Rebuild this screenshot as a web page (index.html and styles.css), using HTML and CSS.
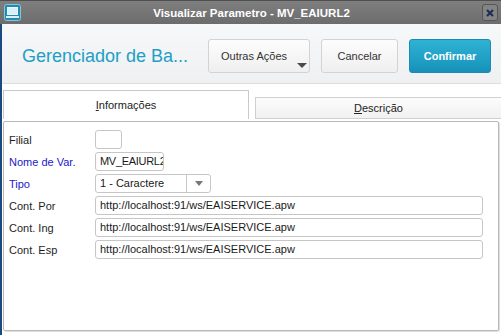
FILE: index.html
```html
<!DOCTYPE html>
<html lang="pt">
<head>
    <meta charset="UTF-8">
    <title>Visualizar Parametro - MV_EAIURL2</title>
    <link rel="stylesheet" href="styles.css">
</head>
<body>
    <div class="titlebar">
        <svg class="app-icon" width="17" height="17" viewBox="0 0 17 17">
            <rect x="0.5" y="0.5" width="16" height="16" rx="2" fill="#1f8db2" stroke="#8cc3d6"/>
            <rect x="3.5" y="3.5" width="10" height="7" fill="#d9eef6" stroke="#eaf6fa"/>
            <rect x="2" y="12" width="13" height="2" fill="#d9eef6"/>
        </svg>
        <div class="title">Visualizar Parametro - MV_EAIURL2</div>
        <div class="close">
            <svg width="8" height="8" viewBox="0 0 8 8">
                <path d="M1 1 L7 7 M7 1 L1 7" stroke="#1f2f52" stroke-width="2.2"/>
            </svg>
        </div>
    </div>

    <div class="main">
        <div class="header">
            <h1>Gerenciador de Ba...</h1>
            <div class="btn btn-more">Outras Ações<span class="caret"></span></div>
            <div class="btn btn-cancel">Cancelar</div>
            <div class="btn btn-ok">Confirmar</div>
        </div>

        <div class="tabs">
            <div class="tab active"><u>I</u>nformações</div>
            <div class="tab"><u>D</u>escrição</div>
        </div>

        <div class="panel">
            <div class="form">
                <label>Filial</label>
                <div class="field w-filial"></div>

                <label class="required">Nome de Var.</label>
                <div class="field w-name">MV_EAIURL2</div>

                <label class="required">Tipo</label>
                <div class="field select">
                    <span class="select-text">1 - Caractere</span>
                    <span class="select-btn"><span class="arrow"></span></span>
                </div>

                <label>Cont. Por</label>
                <div class="field w-long">http://localhost:91/ws/EAISERVICE.apw</div>

                <label>Cont. Ing</label>
                <div class="field w-long">http://localhost:91/ws/EAISERVICE.apw</div>

                <label>Cont. Esp</label>
                <div class="field w-long">http://localhost:91/ws/EAISERVICE.apw</div>
            </div>
        </div>
    </div>
</body>
</html>
```

FILE: styles.css
```css
body {
    margin: 0;
    width: 501px;
    height: 335px;
    overflow: hidden;
    background: #fff;
    font-family: "Liberation Sans", Arial, sans-serif;
    font-size: 11px;
    color: #222;
}
.titlebar {
    height: 23px;
    border-top: 1px solid #4f4f4f;
    background: linear-gradient(#7f7f7f, #6c6c6c);
    display: flex;
    align-items: center;
    padding: 0 3px 0 4px;
}
.app-icon {
    display: block;
}
.title {
    flex: 1;
    text-align: center;
    color: #fff;
    font-weight: bold;
    font-size: 11.5px;
}
.close {
    width: 16px;
    height: 17px;
    box-sizing: border-box;
    border: 1px solid #565656;
    border-radius: 3px;
    background: #848484;
    display: flex;
    align-items: center;
    justify-content: center;
}
.main {
    height: 311px;
    border-left: 2px solid #1b4a80;
    display: flex;
    flex-direction: column;
}
.header {
    height: 54px;
    padding: 5px 10px 0 20px;
    border-bottom: 1px solid #dedede;
    background: linear-gradient(#f7f8f9, #eff0f1);
    display: flex;
    align-items: center;
}
.header h1 {
    flex: 1;
    margin: 0;
    font-size: 18px;
    font-weight: normal;
    color: #1d9fc6;
}
.btn {
    position: relative;
    height: 34px;
    box-sizing: border-box;
    margin-left: 11px;
    border: 1px solid #d3d3d3;
    border-radius: 3px;
    background: linear-gradient(#fdfdfd, #efefef);
    color: #333;
    display: flex;
    align-items: center;
    justify-content: center;
}
.btn-more {
    width: 102px;
    padding-right: 10px;
}
.btn-cancel {
    width: 77px;
}
.btn-ok {
    width: 82px;
    border-color: #1a8cb1;
    background: linear-gradient(#30b2d4, #1692ba);
    color: #fff;
    font-weight: bold;
}
.caret {
    position: absolute;
    right: 2px;
    bottom: 4px;
    border-left: 5px solid transparent;
    border-right: 5px solid transparent;
    border-top: 5px solid #4a4a4a;
}
.tabs {
    height: 29px;
    padding-top: 6px;
    display: flex;
    align-items: flex-end;
}
.tab {
    flex: 1;
    height: 22px;
    box-sizing: border-box;
    margin-left: 6px;
    border: 1px solid #d0d0d0;
    border-right: none;
    background: linear-gradient(#fcfcfc, #f1f1f1);
    display: flex;
    align-items: center;
    justify-content: center;
}
.tab.active {
    flex: none;
    width: 246px;
    height: 29px;
    margin-left: 1px;
    border: 1px solid #c9c9c9;
    border-bottom: none;
    background: #fff;
}
.tab u {
    text-decoration-thickness: 1px;
}
.panel {
    flex: 1;
    margin: 2px 2px 4px 1px;
    border: 1px solid #b8b8b8;
    border-radius: 2px;
    box-shadow: 1px 1px 0 #dedede;
}
.form {
    padding: 8px 0 0 5px;
    display: grid;
    grid-template-columns: 86px auto;
    grid-auto-rows: 19px;
    row-gap: 3px;
    align-items: center;
    justify-items: start;
}
.form label {
    color: #1e1e1e;
}
.form label.required {
    color: #2020c8;
}
.field {
    height: 19px;
    box-sizing: border-box;
    padding: 0 4px;
    border: 1px solid #c6c6c6;
    border-radius: 3px;
    background: #fff;
    line-height: 17px;
    white-space: nowrap;
    overflow: hidden;
    color: #1a1a1a;
}
.w-filial {
    width: 27px;
}
.w-name {
    width: 69px;
    padding: 0 0 0 4px;
    letter-spacing: -0.3px;
}
.w-long {
    width: 388px;
}
.select {
    width: 116px;
    padding-right: 0;
    display: flex;
}
.select-text {
    flex: 1;
}
.select-btn {
    width: 23px;
    border-left: 1px solid #c6c6c6;
    display: flex;
    align-items: center;
    justify-content: center;
}
.arrow {
    border-left: 4px solid transparent;
    border-right: 4px solid transparent;
    border-top: 5px solid #777;
}
```
